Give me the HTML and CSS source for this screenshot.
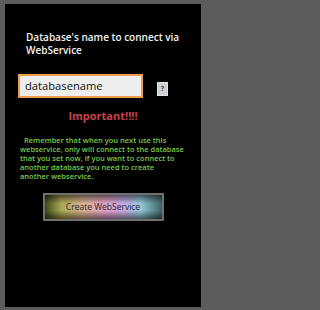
FILE: index.html
```html
<!DOCTYPE html>
<html>
<head>
<meta charset="utf-8">
<link rel="stylesheet" href="styles.css">
</head>
<body>
<div class="screen">
  <div class="title">Database's name to connect via<br>WebService</div>
  <div class="input-row">
    <div class="input">databasename</div>
    <div class="help">?</div>
  </div>
  <div class="important">Important!!!!</div>
  <p class="note">&nbsp;&nbsp;Remember that when you next use this<br>webservice, only will connect to the database<br>that you set now, if you want to connect to<br>another database you need to create<br>another webservice.</p>
  <div class="btn-wrap">
    <div class="btn">Create WebService</div>
  </div>
</div>
</body>
</html>
```
FILE: styles.css
```css
html, body {
  margin: 0;
  padding: 0;
  background: #5c5c5c;
  width: 207px;
  height: 310px;
  overflow: hidden;
  font-family: "Open Sans", "Noto Sans", sans-serif;
}
.screen {
  margin: 4px 6px 0 5px;
  height: 303px;
  background: #000;
  padding-top: 27px;
  box-sizing: border-box;
}
.title {
  color: #f2f2f2;
  font-size: 10px;
  font-weight: 600;
  line-height: 13px;
  padding-left: 21px;
}
.input-row {
  display: flex;
  align-items: flex-end;
  margin-top: 17px;
  padding-left: 13px;
}
.input {
  width: 125px;
  height: 24px;
  box-sizing: border-box;
  border: 2px solid #ec9c4a;
  background: #eeeeee;
  color: #111;
  font-size: 11.2px;
  line-height: 20px;
  padding-left: 5px;
}
.help {
  width: 11px;
  height: 14px;
  margin-left: 14px;
  margin-bottom: 2px;
  background: #cfcfcf;
  border: 1px solid #e0e0e0;
  box-sizing: border-box;
  color: #444;
  font-size: 7px;
  font-weight: 700;
  line-height: 12px;
  text-align: center;
}
.important {
  margin-top: 11px;
  color: #c8404c;
  font-size: 11px;
  font-weight: 700;
  line-height: 14px;
  text-align: center;
}
.note {
  margin: 13px 0 0;
  padding-left: 15px;
  color: #78c850;
  font-size: 7.5px;
  font-weight: 600;
  line-height: 9px;
  white-space: nowrap;
}
.btn-wrap {
  display: flex;
  justify-content: center;
  margin-top: 12px;
}
.btn {
  width: 121px;
  height: 28px;
  box-sizing: border-box;
  border: 2px solid #707070;
  background:
    linear-gradient(to bottom, rgba(0,0,0,0.55), rgba(0,0,0,0) 35%, rgba(0,0,0,0) 65%, rgba(0,0,0,0.55)),
    linear-gradient(to right, #3a4a18, #a8a850 14%, #d8b08c 32%, #e0a0c0 50%, #c8a8e0 66%, #90c8d8 82%, #3c6460);
  color: #2a2a3a;
  font-size: 8.5px;
  line-height: 24px;
  text-align: center;
}
```
